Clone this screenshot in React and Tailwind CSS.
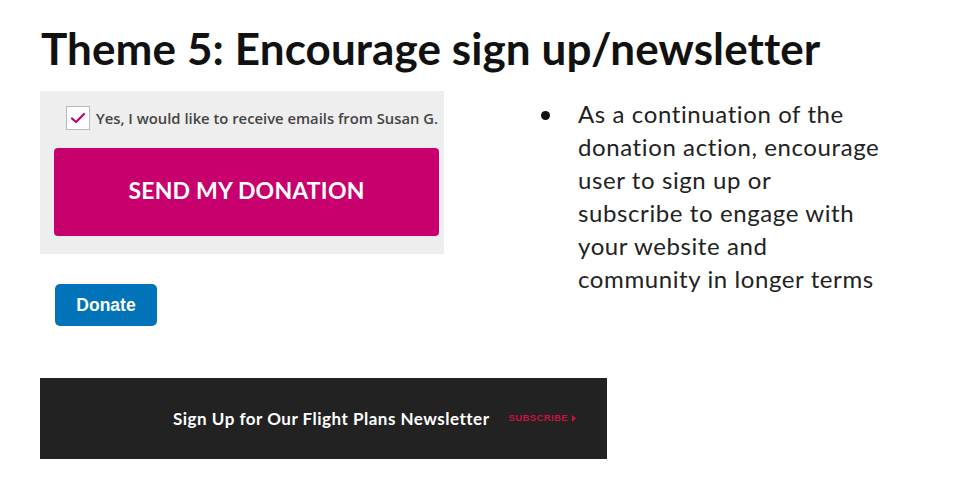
export default function App() {
  return (
    <div className="w-[960px] h-[480px] bg-white overflow-hidden relative font-['Lato',sans-serif] text-[#111]">
      <h1 className="pl-[41px] pt-[23px] h-[91px] text-[44px] leading-[50px] font-bold tracking-[0.1px] whitespace-nowrap">
        Theme 5: Encourage sign up/newsletter
      </h1>
      <div className="flex pl-[40px]">
        <div className="w-[568px] flex flex-col shrink-0">
          <div className="w-[404px] h-[163px] bg-[#eeeeee] pl-[14px] pt-[15px] overflow-hidden">
            <div className="flex items-center gap-[6px] ml-[12px] whitespace-nowrap">
              <div className="w-[24px] h-[24px] bg-white border border-[#bbbbbb] flex items-center justify-center shrink-0">
                <svg width="16" height="16" viewBox="0 0 16 16" fill="none">
                  <path d="M2 8.5 L6 12 L14 4" stroke="#c2006b" strokeWidth="2.2" strokeLinecap="round" strokeLinejoin="round" />
                </svg>
              </div>
              <span className="font-['Open_Sans',sans-serif] font-semibold text-[14.8px] text-[#444]">
                Yes, I would like to receive emails from Susan G.
              </span>
            </div>
            <div className="mt-[18px] w-[385px] h-[88px] bg-[#c8006e] rounded-[4px] flex items-center justify-center">
              <span className="font-['Lato',sans-serif] font-bold text-[23px] text-white tracking-[0.2px] mt-[-4px]">
                SEND MY DONATION
              </span>
            </div>
          </div>
          <div className="mt-[30px] ml-[15px] w-[102px] h-[42px] bg-[#0073b9] rounded-[5px] flex items-center justify-center">
            <span className="font-['Liberation_Sans',sans-serif] font-bold text-[17.5px] text-white">Donate</span>
          </div>
          <div className="mt-[52px] w-[567px] h-[81px] bg-[#222222] flex items-center pl-[133px]">
            <span className="font-['Lato',sans-serif] font-bold text-[17px] tracking-[0.5px] text-white">
              Sign Up for Our Flight Plans Newsletter
            </span>
            <span className="ml-[19px] flex items-center gap-[4px] font-['Liberation_Sans',sans-serif] font-bold text-[9.5px] text-[#c8123f] tracking-[0.4px]">
              SUBSCRIBE
              <svg width="4" height="7" viewBox="0 0 4 7">
                <path d="M0 0 L4 3.5 L0 7 Z" fill="#c8123f" />
              </svg>
            </span>
          </div>
        </div>
        <div className="ml-[-67px] flex items-start">
          <span className="mt-[20px] w-[9px] h-[9px] rounded-full bg-[#111] shrink-0" />
          <p className="ml-[28px] mt-[6px] text-[24px] leading-[33px] tracking-[0.6px] text-[#222] whitespace-nowrap">
            As a continuation of the
            <br />
            donation action, encourage
            <br />
            user to sign up or
            <br />
            subscribe to engage with
            <br />
            your website and
            <br />
            community in longer terms
          </p>
        </div>
      </div>
    </div>
  );
}
